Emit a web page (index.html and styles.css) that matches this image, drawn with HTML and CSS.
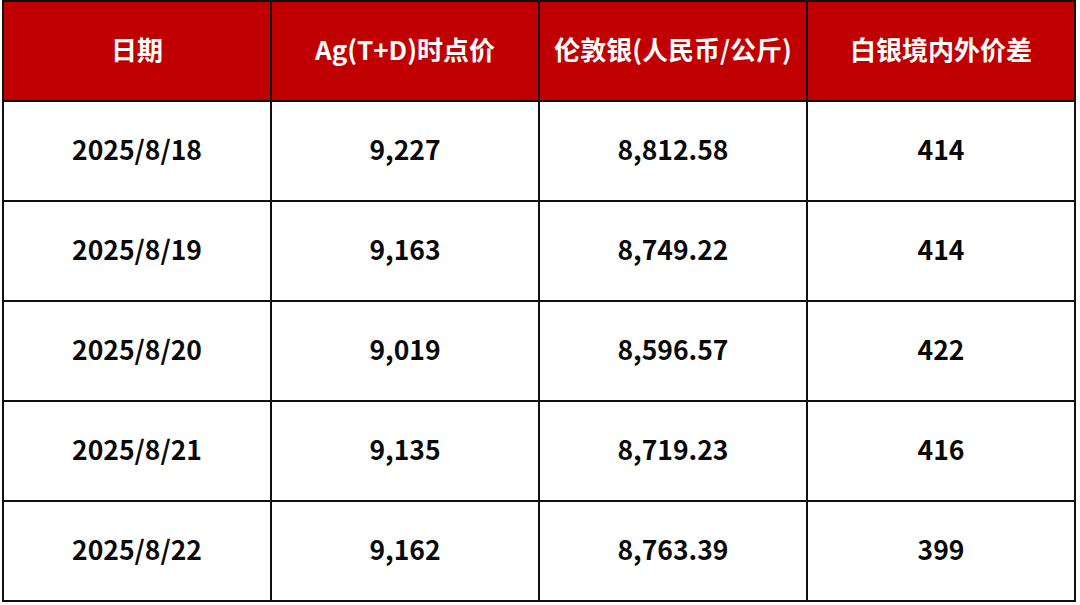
FILE: index.html
```html
<!DOCTYPE html>
<html lang="zh">
<head>
<meta charset="utf-8">
<link rel="stylesheet" href="styles.css">
</head>
<body>
<table class="price-table">
  <thead>
    <tr>
      <th>日期</th>
      <th>Ag(T+D)时点价</th>
      <th>伦敦银(人民币/公斤)</th>
      <th>白银境内外价差</th>
    </tr>
  </thead>
  <tbody>
    <tr><td>2025/8/18</td><td>9,227</td><td>8,812.58</td><td>414</td></tr>
    <tr><td>2025/8/19</td><td>9,163</td><td>8,749.22</td><td>414</td></tr>
    <tr><td>2025/8/20</td><td>9,019</td><td>8,596.57</td><td>422</td></tr>
    <tr><td>2025/8/21</td><td>9,135</td><td>8,719.23</td><td>416</td></tr>
    <tr><td>2025/8/22</td><td>9,162</td><td>8,763.39</td><td>399</td></tr>
  </tbody>
</table>
</body>
</html>
```
FILE: styles.css
```css
html, body {
  margin: 0;
  padding: 0;
  background: #ffffff;
}
body {
  padding: 0 0 0 2px;
  font-family: "Noto Sans CJK SC", "Noto Sans", sans-serif;
}
.price-table {
  border-collapse: collapse;
  table-layout: fixed;
  width: 1074px;
}
.price-table th,
.price-table td {
  border: 2px solid #111111;
  text-align: center;
  vertical-align: middle;
  height: 93px;
  padding: 0 0 5px 0;
  font-weight: 700;
  font-size: 26.5px;
}
.price-table th {
  background: #c00000;
  color: #ffffff;
  font-size: 26px;
}
.price-table td {
  color: #0a0a0a;
}
```
